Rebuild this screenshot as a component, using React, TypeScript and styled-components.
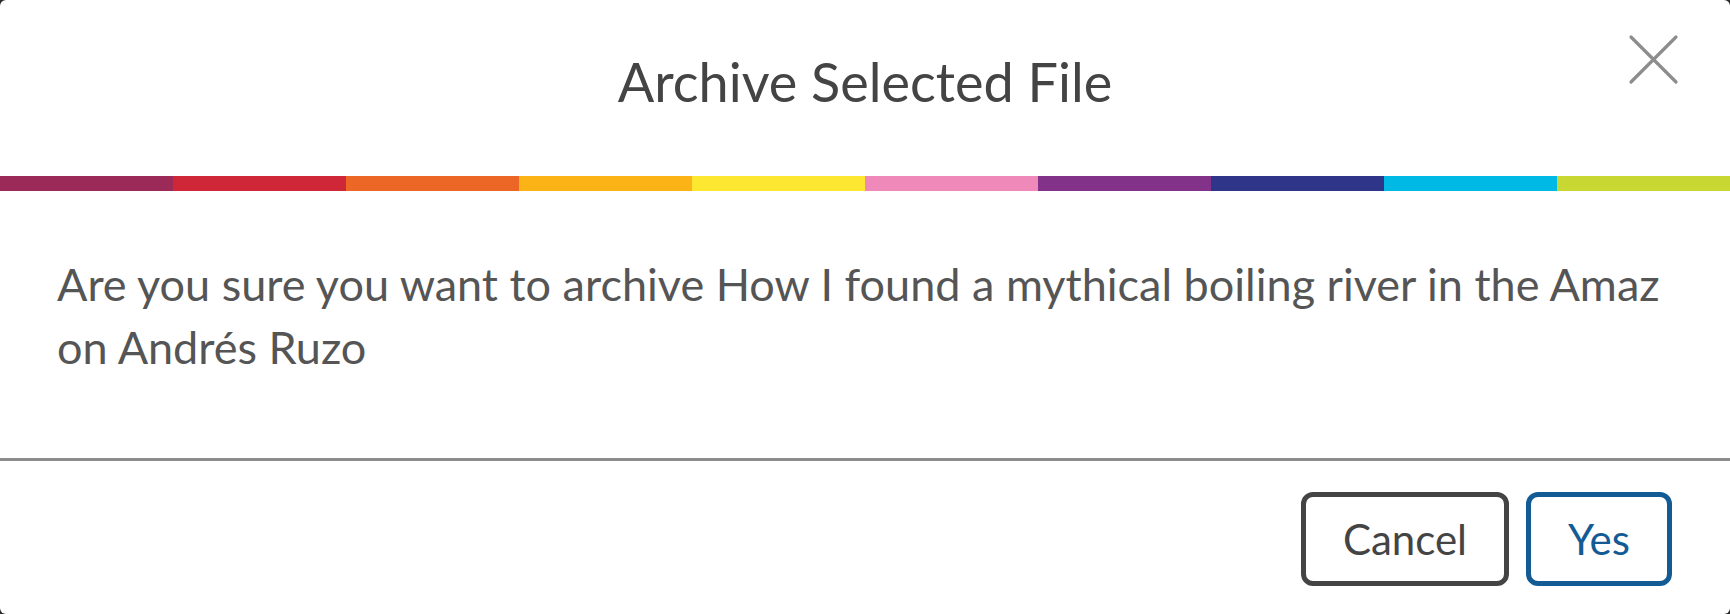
import styled, { createGlobalStyle } from "styled-components";

const GlobalStyle = createGlobalStyle`
  html, body {
    margin: 0;
    padding: 0;
    background: #2b2b2b;
  }
  * {
    box-sizing: border-box;
  }
`;

const STRIPES = [
  "#9c2a58",
  "#cf2737",
  "#ec6625",
  "#fcb316",
  "#fde731",
  "#ee89b9",
  "#833289",
  "#2f3589",
  "#00b9e4",
  "#c9d732",
];

const Modal = styled.div`
  width: 1730px;
  height: 614px;
  background: #fff;
  border-radius: 6px;
  overflow: hidden;
  display: flex;
  flex-direction: column;
  font-family: Lato, "Noto Sans", sans-serif;
`;

const Header = styled.header`
  position: relative;
  height: 176px;
  display: flex;
  justify-content: center;
  padding-top: 49px;
`;

const Title = styled.h2`
  margin: 0;
  font-size: 54px;
  line-height: 66px;
  font-weight: 400;
  color: #444;
`;

const CloseButton = styled.button`
  position: absolute;
  top: 33px;
  right: 50px;
  width: 53px;
  height: 53px;
  padding: 0;
  border: 0;
  background: none;
  cursor: pointer;
  color: #8d8d8d;
  display: flex;
  align-items: center;
  justify-content: center;
`;

const Rainbow = styled.div`
  display: flex;
  height: 15px;
`;

const Stripe = styled.span<{ $color: string }>`
  flex: 1;
  background: ${(p) => p.$color};
`;

const Body = styled.div`
  flex: 1;
  padding: 62px 57px 0;
`;

const Message = styled.p`
  margin: 0;
  font-size: 45px;
  line-height: 63px;
  color: #555;
`;

const Divider = styled.hr`
  margin: 0;
  border: 0;
  height: 3px;
  background: #8c8c8c;
`;

const Footer = styled.footer`
  display: flex;
  justify-content: flex-end;
  gap: 17px;
  padding: 31px 58px 28px;
`;

const Button = styled.button<{ $tone: string }>`
  height: 94px;
  padding: 0 37px;
  border: 5px solid ${(p) => p.$tone};
  border-radius: 12px;
  background: #fff;
  color: ${(p) => p.$tone};
  font-family: inherit;
  font-size: 42px;
  cursor: pointer;
`;

export default function App() {
  return (
    <>
      <GlobalStyle />
      <Modal role="dialog" aria-labelledby="archive-title">
        <Header>
          <Title id="archive-title">Archive Selected File</Title>
          <CloseButton aria-label="Close">
            <svg width="53" height="53" viewBox="0 0 53 53">
              <path
                d="M4 4 L49 49 M49 4 L4 49"
                stroke="currentColor"
                strokeWidth="3.2"
                strokeLinecap="round"
              />
            </svg>
          </CloseButton>
        </Header>
        <Rainbow>
          {STRIPES.map((c) => (
            <Stripe key={c} $color={c} />
          ))}
        </Rainbow>
        <Body>
          <Message>
            Are you sure you want to archive How I found a mythical boiling river in the Amaz on Andrés Ruzo
          </Message>
        </Body>
        <Divider />
        <Footer>
          <Button $tone="#444">Cancel</Button>
          <Button $tone="#135b94">Yes</Button>
        </Footer>
      </Modal>
    </>
  );
}
